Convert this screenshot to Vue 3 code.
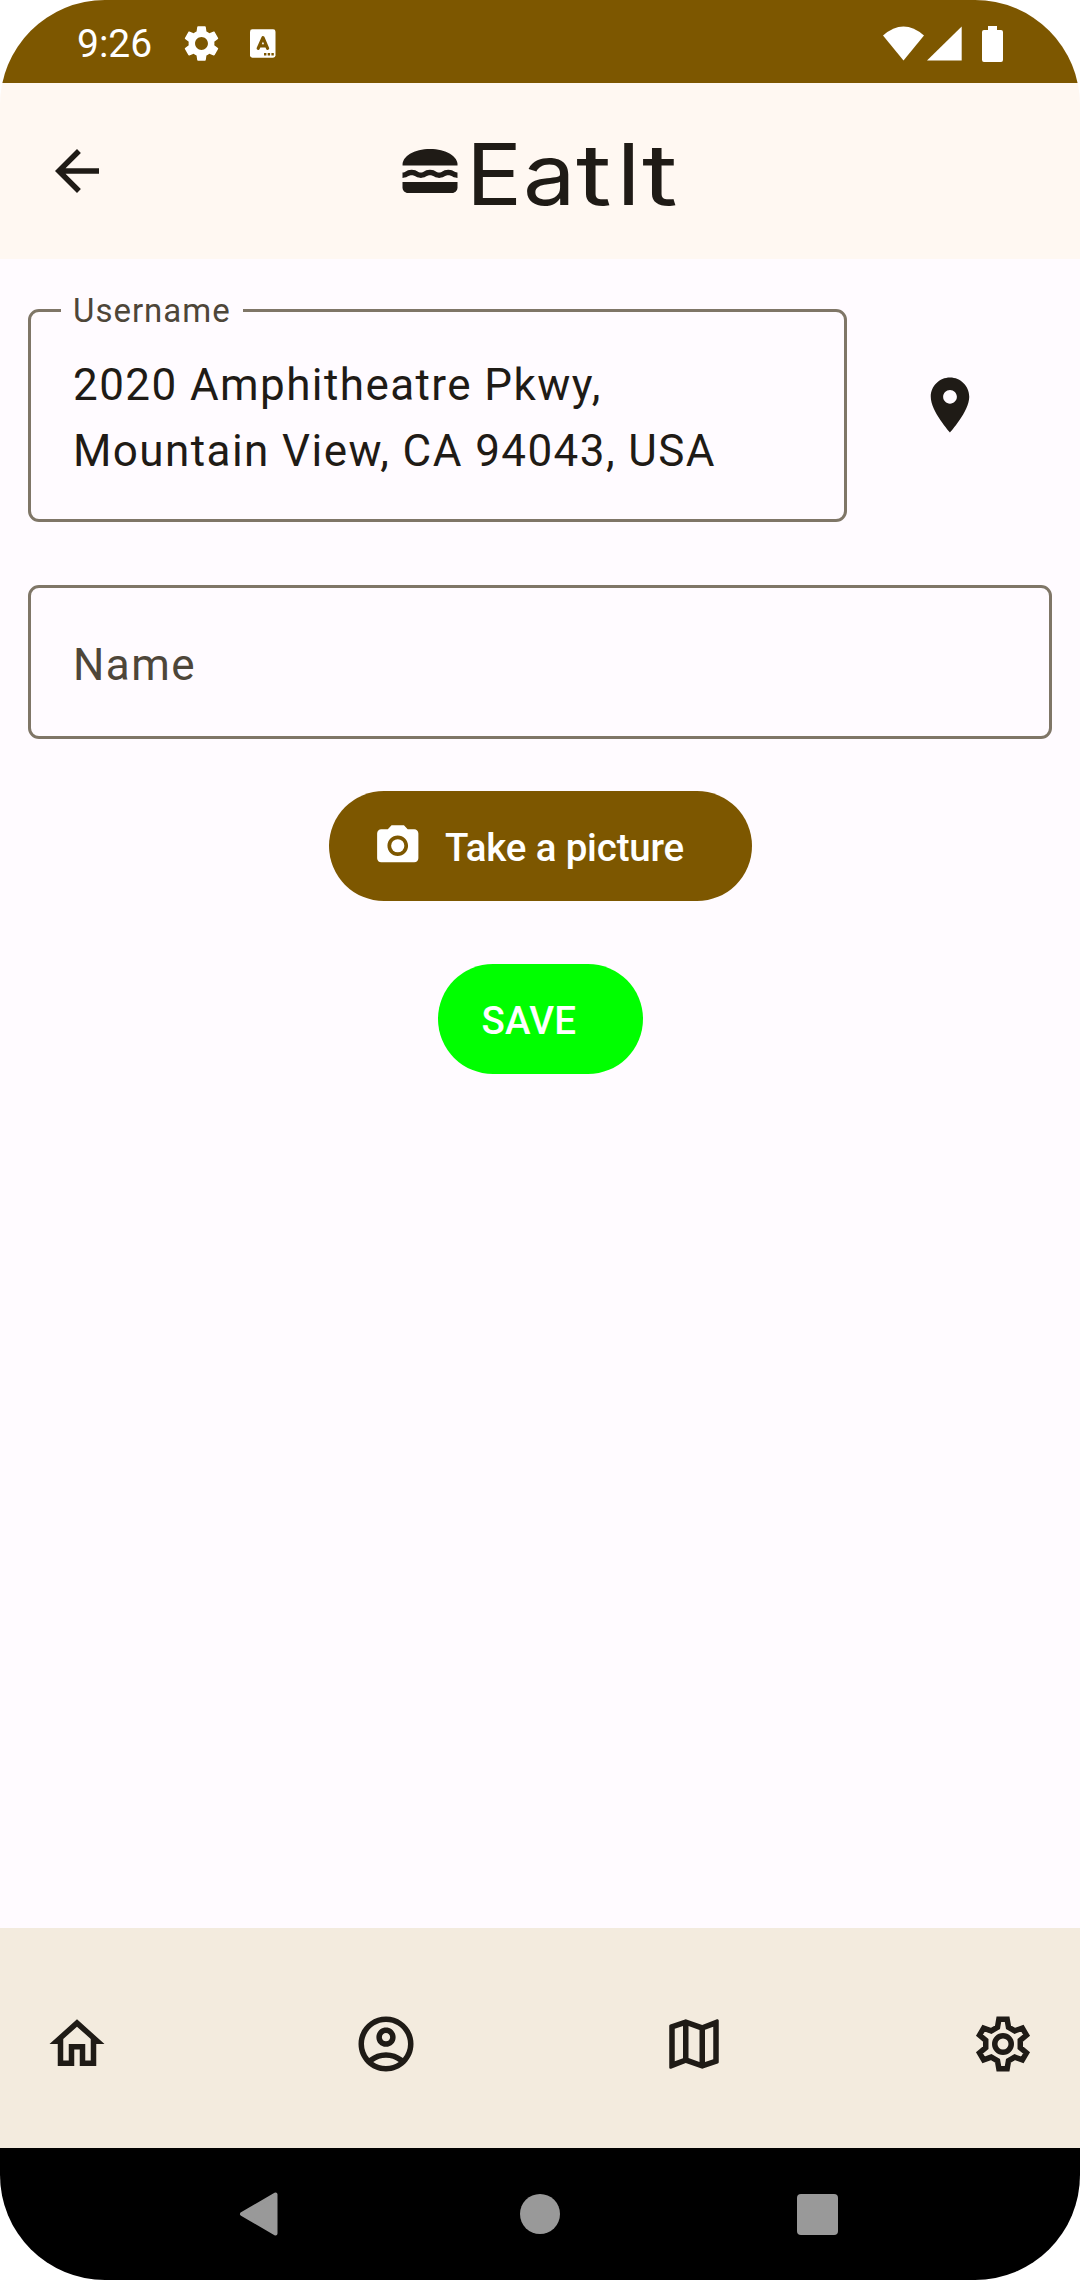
<script setup>
import { ref } from 'vue'

const address = ref(['2020 Amphitheatre Pkwy,', 'Mountain View, CA 94043, USA'])

// Wordmark letters, each with its own class for width and stretch.
const wordmark = [['E', 'e'], ['a', 'a'], ['t', 't'], ['I', 'i'], ['t', 't']]

// Six-toothed gear outline: one tooth profile repeated every 60 degrees.
const tooth = [[-2, -6.1], [-1.5, -9], [1.5, -9], [2, -6.1]]
const gearPoints = Array.from({ length: 6 }, (_, i) => {
  const a = (i * Math.PI) / 3
  return tooth.map(([x, y]) => [
    (12 + x * Math.cos(a) - y * Math.sin(a)).toFixed(2),
    (12 + x * Math.sin(a) + y * Math.cos(a)).toFixed(2),
  ].join(','))
}).flat().join(' ')

const tabs = [
  { name: 'Home', d: 'M12 5.69l5 4.5V18h-2v-6H9v6H7v-7.81l5-4.5M12 3L2 12h3v8h6v-6h2v6h6v-8h3L12 3z' },
  { name: 'Account', d: 'M12 2C6.48 2 2 6.48 2 12s4.48 10 10 10 10-4.48 10-10S17.52 2 12 2zM7.35 18.5C8.66 17.56 10.26 17 12 17s3.34.56 4.65 1.5c-1.31.94-2.91 1.5-4.65 1.5s-3.34-.56-4.65-1.5zm10.79-1.38C16.45 15.8 14.32 15 12 15s-4.45.8-6.14 2.12C4.7 15.73 4 13.95 4 12c0-4.42 3.58-8 8-8s8 3.58 8 8c0 1.95-.7 3.73-1.86 5.12zM12 6c-1.93 0-3.5 1.57-3.5 3.5S10.07 13 12 13s3.5-1.57 3.5-3.5S13.93 6 12 6zm0 5c-.83 0-1.5-.67-1.5-1.5S11.17 8 12 8s1.5.67 1.5 1.5S12.83 11 12 11z' },
  { name: 'Map', d: 'M20.5 3l-.16.03L15 5.1 9 3 3.36 4.9c-.21.07-.36.25-.36.48V20.5c0 .28.22.5.5.5l.16-.03L9 18.9l6 2.1 5.64-1.9c.21-.07.36-.25.36-.48V3.5c0-.28-.22-.5-.5-.5zM10 5.47l4 1.4v11.66l-4-1.4V5.47zm-5 .99l3-1.01v11.7l-3 1.16V6.46zm14 11.08l-3 1.01V6.86l3-1.16v11.84z' },
]
</script>

<template>
  <div class="screen">
    <div class="status">
      <span class="clock">9:26</span>
      <svg class="status-gear" viewBox="0 0 24 24"><path d="M19.14 12.94c.04-.3.06-.61.06-.94 0-.32-.02-.64-.07-.94l2.03-1.58c.18-.14.23-.41.12-.61l-1.92-3.32c-.12-.22-.37-.29-.59-.22l-2.39.96c-.5-.38-1.03-.7-1.62-.94L14.4 2.81c-.04-.24-.24-.41-.48-.41h-3.84c-.24 0-.43.17-.47.41l-.36 2.54c-.59.24-1.13.57-1.62.94l-2.39-.96c-.22-.08-.47 0-.59.22L2.74 8.87c-.12.21-.08.47.12.61l2.03 1.58c-.05.3-.09.63-.09.94s.02.64.07.94l-2.03 1.58c-.18.14-.23.41-.12.61l1.92 3.32c.12.22.37.29.59.22l2.39-.96c.5.38 1.03.7 1.62.94l.36 2.54c.05.24.24.41.48.41h3.84c.24 0 .44-.17.47-.41l.36-2.54c.59-.24 1.13-.56 1.62-.94l2.39.96c.22.08.47 0 .59-.22l1.92-3.32c.12-.22.07-.47-.12-.61l-2.01-1.58zM12 15.6c-1.98 0-3.6-1.62-3.6-3.6s1.62-3.6 3.6-3.6 3.6 1.62 3.6 3.6-1.62 3.6-3.6 3.6z" /></svg>
      <svg class="status-lang" viewBox="0 0 26 29">
        <rect x="0" y="0.3" width="25.5" height="28.4" rx="2.4" />
        <path class="cut" d="M8.2 19.4 L13 8.6 L17.6 19.4 M9.8 16.8 H16" />
        <path class="dots" d="M14 24h2.4v2.4H14zM17.7 24h2.4v2.4h-2.4zM21.4 24h2.4v2.4h-2.4z" />
      </svg>
      <svg class="status-right" viewBox="0 0 122 38">
        <path d="M1 10.5Q21.5-7.5 42 10.5L21.5 35.5z" />
        <path d="M45 35.5L79.7 1.5V35.5z" />
        <path d="M106 1h9v4h4q2 0 2 2v28q0 2-2 2h-17q-2 0-2-2V7q0-2 2-2h4z" />
      </svg>
    </div>

    <header class="topbar">
      <svg class="icon" viewBox="0 0 24 24"><path d="M20 11H7.83l5.59-5.59L12 4l-8 8 8 8 1.41-1.41L7.83 13H20v-2z" /></svg>
      <h1 class="brand">
        <svg class="icon" viewBox="0 0 24 24">
          <path d="M22 10c.32-3.28-4.28-6-9.99-6S1.7 6.72 2.02 10H22z" />
          <path d="M5.35 13.5c.55 0 .78.14 1.15.36.45.27 1.07.64 2.18.64s1.73-.37 2.18-.64c.37-.23.59-.36 1.15-.36.55 0 .78.14 1.15.36.45.27 1.07.64 2.18.64s1.73-.37 2.18-.64c.37-.23.59-.36 1.15-.36.55 0 .78.14 1.15.36.45.27 1.07.63 2.17.64v-1.98c0 0-.79-.16-1.16-.38-.45-.27-1.07-.64-2.18-.64s-1.73.37-2.18.64c-.37.23-.6.36-1.15.36s-.78-.14-1.15-.36c-.45-.27-1.07-.64-2.18-.64s-1.73.37-2.18.64c-.37.23-.59.36-1.15.36s-.78-.14-1.15-.36c-.45-.27-1.07-.64-2.18-.64s-1.73.37-2.18.64c-.37.23-.59.36-1.15.36v2c1.11 0 1.73-.37 2.18-.64.37-.22.62-.36 1.17-.36z" />
          <path d="M2 16v2c0 1.1.9 2 2 2h16c1.1 0 2-.9 2-2v-2H2z" />
        </svg>
        <span class="wordmark"><span v-for="([ch, cls], i) in wordmark" :key="i" :class="cls">{{ ch }}</span></span>
      </h1>
    </header>

    <main class="content">
      <div class="address-row">
        <div class="field address">
          <span class="label">Username</span>
          <div v-for="line in address" :key="line">{{ line }}</div>
        </div>
        <div class="pin-slot">
          <svg class="icon" viewBox="0 0 24 24"><path d="M12 2C8.13 2 5 5.13 5 9c0 5.25 7 13 7 13s7-7.75 7-13c0-3.87-3.13-7-7-7zm0 9.5c-1.38 0-2.5-1.12-2.5-2.5s1.12-2.5 2.5-2.5 2.5 1.12 2.5 2.5-1.12 2.5-2.5 2.5z" /></svg>
        </div>
      </div>
      <div class="field name">Name</div>
      <button class="btn picture">
        <svg viewBox="0 0 24 24"><circle cx="12" cy="12" r="3.2" /><path d="M9 2L7.17 4H4c-1.1 0-2 .9-2 2v12c0 1.1.9 2 2 2h16c1.1 0 2-.9 2-2V6c0-1.1-.9-2-2-2h-3.17L15 2H9zm3 15c-2.76 0-5-2.24-5-5s2.24-5 5-5 5 2.24 5 5-2.24 5-5 5z" /></svg>
        <span>Take a picture</span>
      </button>
      <button class="btn save"><span>SAVE</span></button>
    </main>

    <nav class="tabs">
      <svg v-for="tab in tabs" :key="tab.name" class="icon" viewBox="0 0 24 24"><path :d="tab.d" /></svg>
      <svg class="icon outline" viewBox="0 0 24 24">
        <polygon :points="gearPoints" />
        <circle cx="12" cy="12" r="3" />
      </svg>
    </nav>

    <div class="system">
      <svg viewBox="0 0 42 48"><path d="M4 24L37.5 4.5V43.5z" stroke-width="4" stroke-linejoin="round" /></svg>
      <i class="circle"></i>
      <i class="square"></i>
    </div>
  </div>
</template>

<style>
body {
  background: #fff;
}
</style>

<style scoped>
.screen {
  display: flex;
  flex-direction: column;
  width: 1080px;
  height: 2280px;
  overflow: hidden;
  border-radius: 105px;
  background: #fffbff;
  color: #1f1b16;
  font-family: Roboto, sans-serif;
}
svg {
  display: block;
  flex: none;
  fill: currentColor;
}
.icon {
  width: 66px;
  height: 66px;
}
.status {
  display: flex;
  align-items: center;
  box-sizing: border-box;
  height: 83px;
  padding: 4px 76px 0 77px;
  background: #7d5700;
  color: #fff;
}
.clock {
  width: 103px;
  padding-top: 1px;
  font-size: 39px;
  line-height: 46px;
}
.status-gear {
  width: 43px;
  height: 43px;
}
.status-lang {
  width: 26px;
  height: 29px;
  margin-left: 26.5px;
}
.cut {
  fill: none;
  stroke: #7d5700;
  stroke-width: 3.2;
  stroke-linecap: round;
  stroke-linejoin: round;
}
.dots {
  fill: #7d5700;
}
.status-right {
  width: 122px;
  height: 38px;
  margin-left: auto;
}
.topbar {
  display: grid;
  grid-template-columns: 1fr auto 1fr;
  align-items: center;
  box-sizing: border-box;
  height: 176px;
  padding: 0 44px;
  background: #fff8f2;
}
.brand {
  display: flex;
  align-items: center;
  width: 287px;
  margin: 0;
}
.wordmark {
  display: flex;
  padding: 8px 0 0 3.5px;
  font: 400 85px/100px Inter, sans-serif;
  font-optical-sizing: none;
}
.wordmark span {
  flex: none;
  transform: scaleX(1.1);
  transform-origin: left;
}
.wordmark .e {
  width: 57.4px;
}
.wordmark .a {
  width: 52.4px;
}
.wordmark .t {
  width: 39.8px;
  transform: scaleX(1.28);
}
.wordmark .i {
  width: 26.2px;
}
.content {
  display: flex;
  flex: 1;
  flex-direction: column;
  align-items: center;
  padding: 50px 28px 0;
}
.address-row {
  display: flex;
  align-self: stretch;
}
.field {
  position: relative;
  box-sizing: border-box;
  border: 3px solid #7f7667;
  border-radius: 11px;
  font-size: 44px;
  line-height: 66px;
  letter-spacing: 1.42px;
}
.address {
  width: 819px;
  height: 213px;
  padding: 40px 42px;
}
.label {
  position: absolute;
  top: -23px;
  left: 30px;
  padding: 0 12px;
  background: #fffbff;
  color: #4e4639;
  font-size: 33px;
  line-height: 44px;
  letter-spacing: 1px;
}
.pin-slot {
  display: flex;
  flex: 1;
  justify-content: center;
  padding-top: 63px;
}
.name {
  align-self: stretch;
  height: 154px;
  margin-top: 63px;
  padding: 44px 42px;
  color: #4e4639;
}
.btn {
  display: flex;
  align-items: center;
  gap: 23px;
  box-sizing: border-box;
  height: 110px;
  padding: 0 0 0 44px;
  border: 0;
  border-radius: 55px;
  color: #fff;
  font: 500 38.5px/55px Roboto, sans-serif;
  white-space: nowrap;
}
.btn svg {
  width: 49.5px;
  height: 49.5px;
}
.btn span {
  padding-top: 2px;
}
.picture {
  width: 423px;
  margin-top: 52px;
  background: #7d5700;
  letter-spacing: -0.18px;
}
.save {
  width: 205px;
  margin-top: 63px;
  background: #0f0;
  letter-spacing: 0.2px;
}
.tabs {
  display: flex;
  justify-content: space-between;
  box-sizing: border-box;
  height: 220px;
  padding: 83px 44px 0;
  background: #f3ebde;
}
.outline {
  fill: none;
  stroke: currentColor;
  stroke-width: 2;
}
.system {
  display: flex;
  align-items: center;
  justify-content: space-between;
  box-sizing: border-box;
  height: 132px;
  padding: 0 242px 0 238px;
  background: #000;
  color: #999;
}
.system svg {
  width: 42px;
  height: 48px;
  stroke: currentColor;
}
.circle {
  width: 40px;
  height: 40px;
  margin-left: 3px;
  border-radius: 50%;
  background: #999;
}
.square {
  width: 41px;
  height: 41px;
  border-radius: 4px;
  background: #999;
}
</style>
